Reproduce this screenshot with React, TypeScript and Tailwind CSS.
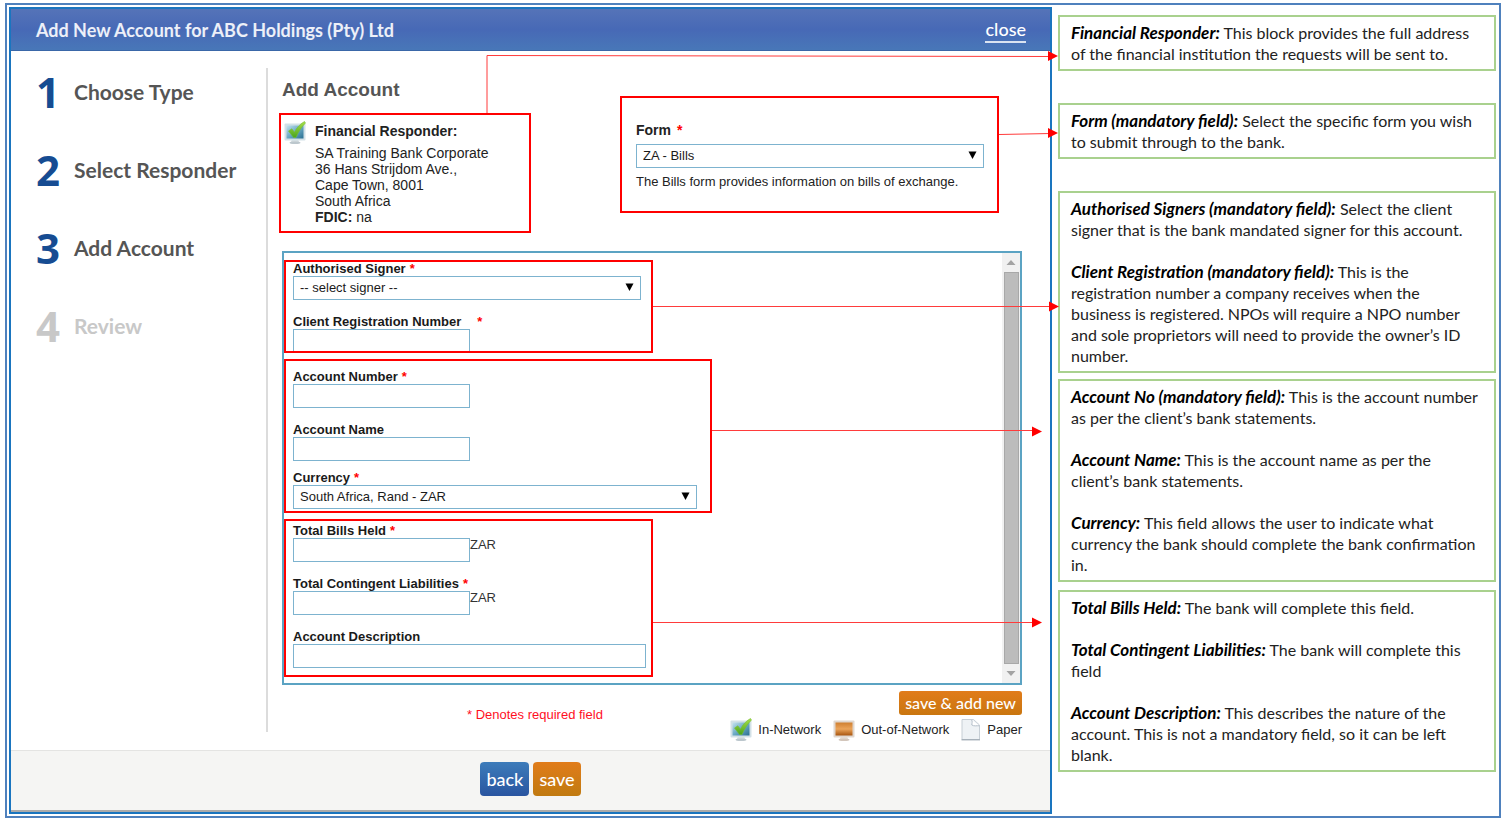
import type { ReactNode } from "react";

// Add Account dialog with the annotated help column on the right.

const steps = [
  { number: 1, label: "Choose Type", done: true },
  { number: 2, label: "Select Responder", done: true },
  { number: 3, label: "Add Account", done: true },
  { number: 4, label: "Review", done: false },
];

interface NoteItem {
  term: string;
  body: string;
}

const notes: { gap: string; items: NoteItem[] }[] = [
  {
    gap: "",
    items: [
      {
        term: "Financial Responder:",
        body: "This block provides the full address of the financial institution the requests will be sent to.",
      },
    ],
  },
  {
    gap: "mt-8",
    items: [
      {
        term: "Form (mandatory field):",
        body: "Select the specific form you wish to submit through to the bank.",
      },
    ],
  },
  {
    gap: "mt-8",
    items: [
      {
        term: "Authorised Signers (mandatory field):",
        body: "Select the client signer that is the bank mandated signer for this account.",
      },
      {
        term: "Client Registration (mandatory field):",
        body: "This is the registration number a company receives when the business is registered. NPOs will require a NPO number and sole proprietors will need to provide the owner’s ID number.",
      },
    ],
  },
  {
    gap: "mt-1.5",
    items: [
      {
        term: "Account No (mandatory field):",
        body: "This is the account number as per the client’s bank statements.",
      },
      {
        term: "Account Name:",
        body: "This is the account name as per the client’s bank statements.",
      },
      {
        term: "Currency:",
        body: "This field allows the user to indicate what currency the bank should complete the bank confirmation in.",
      },
    ],
  },
  {
    gap: "mt-2",
    items: [
      { term: "Total Bills Held:", body: "The bank will complete this field." },
      { term: "Total Contingent Liabilities:", body: "The bank will complete this field" },
      {
        term: "Account Description:",
        body: "This describes the nature of the account. This is not a mandatory field, so it can be left blank.",
      },
    ],
  },
];

const highlight = "outline-2 -outline-offset-2 outline-[#ff0000]";

function MonitorIcon({ tone }: { tone: "in" | "out" }) {
  const isIn = tone === "in";
  return (
    <svg width="22" height="24" viewBox="0 0 22 24" className="shrink-0" aria-hidden="true">
      <defs>
        <linearGradient id={`screen-${tone}`} x1="0" y1="0" x2={isIn ? "1" : "0"} y2="1">
          <stop offset="0" stopColor={isIn ? "#c4e2ee" : "#cf7f30"} />
          <stop offset="0.5" stopColor={isIn ? "#6aa9c4" : "#eba45a"} />
          <stop offset="1" stopColor={isIn ? "#2a6f92" : "#a8550f"} />
        </linearGradient>
        <linearGradient id={`tick-${tone}`} x1="0" y1="0" x2="0" y2="1">
          <stop offset="0" stopColor="#a9e04a" />
          <stop offset="1" stopColor="#4aa51c" />
        </linearGradient>
      </defs>
      <path d="M8 18h6l1 3H7z" fill={isIn ? "#d5dde1" : "#e6ddd5"} />
      <ellipse cx="11" cy="21.7" rx="5.500" ry="1.300" fill={isIn ? "#bcc7cd" : "#d3c6bb"} />
      <rect x="0.500" y="2.500" width="21" height="17" rx="1" fill={isIn ? "#d3e1e7" : "#e0d7cf"} />
      <rect x="2.500" y="4.500" width="17" height="13" fill={`url(#screen-${tone})`} />
      {isIn && (
        <path
          d="M4.500 10 7.800 7.800l2.700 3.400C12.500 6.800 16 3 20.500 0.500l1 1.500C17.500 6 14.300 11 12 16.500H9.500z"
          fill={`url(#tick-${tone})`}
          stroke="#76bd32"
          strokeWidth="0.600"
        />
      )}
    </svg>
  );
}

function PaperIcon() {
  return (
    <svg width="20" height="22" viewBox="0 0 20 22" className="shrink-0" aria-hidden="true">
      <path d="M1 0.500h11.500L18.500 6v14.500H1z" fill="#eef2f5" stroke="#c6ced5" />
      <path d="M10.500 0.800c1.300 1.500 0.300 3.700 0.300 5.200 2.200 1.500 5.200 0.500 7.500 0.800" fill="#ffffff" stroke="#b4bfc9" />
      <path d="M0.500 20.800h18.500" stroke="#9faab3" strokeWidth="1.200" />
    </svg>
  );
}

function Required({ className = "ml-1" }: { className?: string }) {
  return <span className={`${className} text-[#ff0000]`}>*</span>;
}

interface FieldProps {
  id: string;
  label: string;
  required?: boolean;
  starClass?: string;
  children: ReactNode;
}

function Field({ id, label, required, starClass, children }: FieldProps) {
  return (
    <div>
      <label htmlFor={id} className="block text-[13px] leading-[14px] font-bold text-[#1a1a1a]">
        {label}
        {required && <Required className={starClass} />}
      </label>
      {children}
    </div>
  );
}

function TextInput({ id, width = "w-[177px]" }: { id: string; width?: string }) {
  return (
    <input
      id={id}
      type="text"
      className={`block h-6 ${width} border border-[#7db3cf] bg-white px-1.5 text-[13px] outline-none`}
    />
  );
}

function SelectBox({ id, width, value }: { id: string; width: string; value: string }) {
  return (
    <div className={`relative ${width}`}>
      <select
        id={id}
        defaultValue={value}
        className="block h-6 w-full appearance-none border border-[#7db3cf] bg-white px-1.5 text-[13px] text-[#1a1a1a] outline-none"
      >
        <option>{value}</option>
      </select>
      <svg
        width="9"
        height="8"
        viewBox="0 0 9 8"
        className="pointer-events-none absolute top-[7px] right-[7px]"
        aria-hidden="true"
      >
        <path d="M0.500 0.500h8L4.500 8z" fill="#000" />
      </svg>
    </div>
  );
}

// ── Red connectors from each highlighted block to its note ──
function Connectors() {
  const arrows = [
    { line: "M478 106V48.500L1042 49.500", tip: 1049, y: 49 },
    { line: "M990 127.500L1042 126.500", tip: 1049, y: 126 },
    { line: "M644 299.500H1042", tip: 1050, y: 299.5 },
    { line: "M703 423.500H1025", tip: 1033, y: 424.5 },
    { line: "M644 615.500H1025", tip: 1033, y: 615.5 },
  ];
  return (
    <svg
      width="1060"
      height="807"
      viewBox="0 0 1060 807"
      className="pointer-events-none absolute top-0.5 left-0.5 z-10"
      aria-hidden="true"
    >
      {arrows.map((a) => (
        <g key={a.line}>
          <path d={a.line} fill="none" stroke="#ff3b3b" strokeWidth="1" />
          <path d={`M${a.tip - 10} ${a.y - 5}V${a.y + 5}L${a.tip} ${a.y}z`} fill="#ff0000" />
        </g>
      ))}
    </svg>
  );
}

function Sidebar() {
  return (
    <ol className="mt-[17px] mb-[18px] flex w-[257px] shrink-0 flex-col gap-[30px] border-r-2 border-[#dcdcdc] pl-[25px] font-[Lato,sans-serif]">
      {steps.map((step) => (
        <li
          key={step.number}
          className={`flex h-12 items-center font-bold ${step.done ? "text-[#555]" : "text-[#c8c8c8]"}`}
        >
          <span
            className={`w-[38px] font-['Open_Sans',sans-serif] text-[42px] leading-[48px] ${step.done ? "text-[#164c92]" : ""}`}
          >
            {step.number}
          </span>
          <span className="text-[21px]">{step.label}</span>
        </li>
      ))}
    </ol>
  );
}

function ScrollBar() {
  return (
    <div className="flex w-[18px] shrink-0 flex-col items-center bg-[#f1f1f1]">
      <svg width="18" height="19" viewBox="0 0 18 19" aria-hidden="true">
        <path d="M4.500 12 9 7l4.500 5z" fill="#a3a3a3" />
      </svg>
      <div className="w-[15px] flex-1 border border-[#a8a8a8] bg-[#bcbcbc]" />
      <svg width="18" height="19" viewBox="0 0 18 19" aria-hidden="true">
        <path d="M4.500 7 9 12l4.500-5z" fill="#a3a3a3" />
      </svg>
    </div>
  );
}

function AccountForm() {
  return (
    <div className="mt-[18px] ml-[3px] flex border-2 border-[#5ba3c3]">
      <div className="flex flex-1 flex-col items-start gap-1.5 pt-[7px] pb-1.5">
        <section className={`flex w-[369px] flex-col gap-[15px] pt-0.5 pl-[9px] ${highlight}`}>
          <Field id="signer" label="Authorised Signer" required>
            <SelectBox id="signer" width="w-[348px]" value="-- select signer --" />
          </Field>
          <Field id="registration" label="Client Registration Number" required starClass="ml-4">
            <TextInput id="registration" />
          </Field>
        </section>

        <section className={`flex w-[428px] flex-col pt-[11px] pb-1 pl-[9px] ${highlight}`}>
          <Field id="account-number" label="Account Number" required>
            <TextInput id="account-number" />
          </Field>
          <div className="mt-[15px] mb-2.5">
            <Field id="account-name" label="Account Name">
              <TextInput id="account-name" />
            </Field>
          </div>
          <Field id="currency" label="Currency" required>
            <SelectBox id="currency" width="w-[404px]" value="South Africa, Rand - ZAR" />
          </Field>
        </section>

        <section className={`flex w-[369px] flex-col gap-[15px] pt-[5px] pb-[9px] pl-[9px] ${highlight}`}>
          <Field id="bills" label="Total Bills Held" required>
            <div className="flex text-[13px] leading-[14px] text-[#333]">
              <TextInput id="bills" />
              <span>ZAR</span>
            </div>
          </Field>
          <Field id="liabilities" label="Total Contingent Liabilities" required>
            <div className="flex text-[13px] leading-[14px] text-[#333]">
              <TextInput id="liabilities" />
              <span>ZAR</span>
            </div>
          </Field>
          <Field id="description" label="Account Description">
            <TextInput id="description" width="w-[353px]" />
          </Field>
        </section>
      </div>
      <ScrollBar />
    </div>
  );
}

function Dialog() {
  return (
    <main className="flex min-w-0 flex-1 flex-col border-2 border-[#1a75bf]">
      <header className="flex h-[42px] items-center justify-between border-b border-[#3a67a8] bg-linear-to-b from-[#5573b8] via-[#4769b6] to-[#4877b8] pr-6 pl-[25px] font-[Lato,sans-serif] text-lg text-white">
        <h1 className="font-bold text-white/90">Add New Account for ABC Holdings (Pty) Ltd</h1>
        <a href="#close" className="border-b-2 border-white/80 leading-6 font-medium">
          close
        </a>
      </header>

      <div className="flex flex-1">
        <Sidebar />
        <div className="flex-1 pt-[17px] pr-7 pb-2 pl-[11px]">
          <div className="flex items-end justify-between">
            <div>
              <h2 className="mt-2 mb-[9px] pl-[3px] text-[19px] leading-7 font-bold text-[#555]">Add Account</h2>
              <section className={`flex w-[252px] gap-[9px] pt-2 pr-2 pb-2 pl-[5px] text-sm text-[#222] ${highlight}`}>
                <MonitorIcon tone="in" />
                <div>
                  <h3 className="mb-1 leading-5 font-bold">Financial Responder:</h3>
                  <address className="leading-4 whitespace-nowrap not-italic">
                    SA Training Bank Corporate
                    <br />
                    36 Hans Strijdom Ave.,
                    <br />
                    Cape Town, 8001
                    <br />
                    South Africa
                    <br />
                    <b>FDIC:</b> na
                  </address>
                </div>
              </section>
            </div>
            <section className={`mr-[23px] mb-5 w-[379px] px-4 pt-[25px] pb-[21px] text-[#222] ${highlight}`}>
              <label htmlFor="form" className="block pb-[5px] text-sm leading-[18px] font-bold">
                Form
                <Required className="ml-1.5" />
              </label>
              <SelectBox id="form" width="w-[348px]" value="ZA - Bills" />
              <p className="mt-1 text-[13px] leading-5 whitespace-nowrap">
                The Bills form provides information on bills of exchange.
              </p>
            </section>
          </div>

          <AccountForm />

          <div className="flex items-start justify-between pl-[188px]">
            <p className="mt-[22px] text-[13px] leading-4 text-[#ff0f1f]">* Denotes required field</p>
            <div className="flex flex-col items-end gap-[3px] pt-1.5">
              <button
                type="button"
                className="h-6 rounded-[3px] bg-linear-to-b from-[#e17c1a] to-[#c9760f] px-1.5 font-[Lato,sans-serif] text-base leading-5 font-medium text-white"
              >
                save &amp; add new
              </button>
              <ul className="flex items-center gap-3 text-[13px] leading-6 text-[#222]">
                <li className="flex items-center gap-1.5">
                  <MonitorIcon tone="in" />
                  In-Network
                </li>
                <li className="flex items-center gap-1.5">
                  <MonitorIcon tone="out" />
                  Out-of-Network
                </li>
                <li className="flex items-center gap-1.5">
                  <PaperIcon />
                  Paper
                </li>
              </ul>
            </div>
          </div>
        </div>
      </div>

      <footer className="flex justify-center gap-1 border-t border-b-2 border-t-[#e4e4e2] border-b-[#ababab] bg-[#f5f5f3] pt-[11px] pb-3.5 font-[Lato,sans-serif] text-lg font-medium text-white">
        <button type="button" className="h-[34px] rounded-sm bg-linear-to-b from-[#3d7cba] to-[#2a55a0] px-1.5">
          back
        </button>
        <button type="button" className="h-[34px] rounded-sm bg-linear-to-b from-[#e17c1a] to-[#c07a10] px-1.5">
          save
        </button>
      </footer>
    </main>
  );
}

export default function App() {
  return (
    <div className="bg-white pt-[3px] pr-[9px] pb-2 pl-[5px] font-['Liberation_Sans',Arial,sans-serif]">
      <div className="relative flex border-2 border-[#4f81bd] p-0.5">
        <Dialog />
        <aside className="w-[445px] shrink-0 pt-2 pr-px pl-1.5 font-[Lato,sans-serif] text-base leading-[21px] text-[#222]">
          {notes.map((note) => (
            <section
              key={note.items[0].term}
              className={`flex flex-col gap-[21px] border-2 border-[#a9d18e] py-[5px] pr-3 pl-[11px] ${note.gap}`}
            >
              {note.items.map((item) => (
                <p key={item.term}>
                  <b className="text-[17px] text-black italic">{item.term}</b> {item.body}
                </p>
              ))}
            </section>
          ))}
        </aside>
        <Connectors />
      </div>
    </div>
  );
}
